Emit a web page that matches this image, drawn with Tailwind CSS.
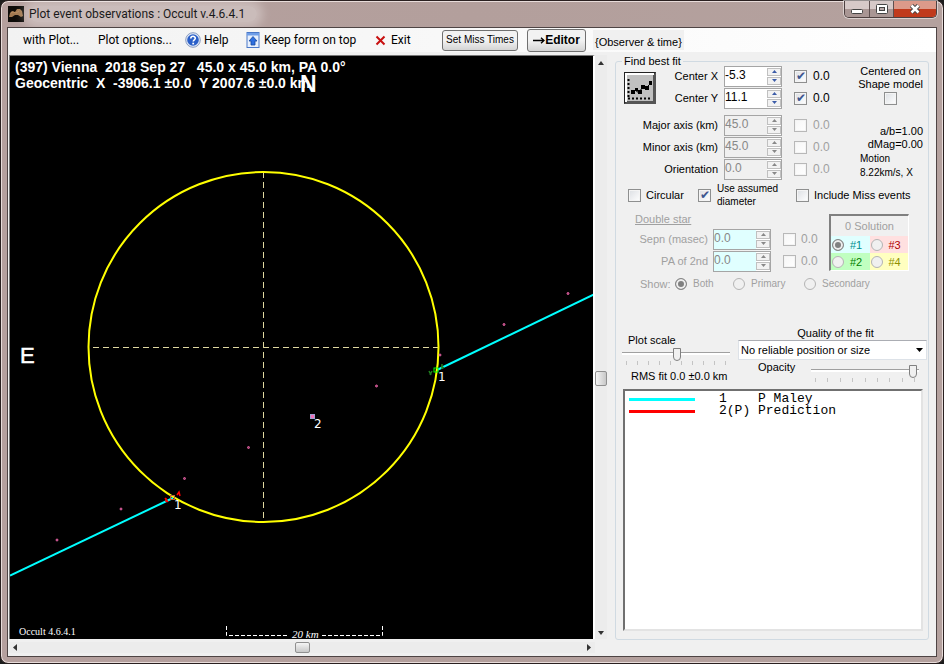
<!DOCTYPE html>
<html lang="en">
<head>
<meta charset="utf-8">
<title>Plot event observations : Occult v.4.6.4.1</title>
<script src="https://cdn.jsdelivr.net/npm/@tailwindcss/browser@4"></script>
</head>
<body class="bg-[#1c1c1c] font-['Liberation_Sans',Arial,sans-serif] text-[11px] text-black">
<svg class="hidden" aria-hidden="true">
  <symbol id="up" viewBox="0 0 5 3"><path d="M0 3 2.500 0 5 3Z" fill="currentColor"/></symbol>
  <symbol id="down" viewBox="0 0 5 3"><path d="M0 0 2.500 3 5 0Z" fill="currentColor"/></symbol>
</svg>
<div class="flex h-screen flex-col rounded-lg border border-[#2a2020] bg-linear-to-r from-[#b5a09e] via-[#b39f9c] to-[#b4a19e] px-1.5 pb-1.5 ring-1 ring-[#e8dcda] ring-inset">

  <header class="flex h-[26px] shrink-0 items-start justify-between">
    <div class="flex h-full items-center gap-[5px] pl-px">
      <svg class="size-4" viewBox="0 0 16 16" aria-hidden="true"><rect width="16" height="16" fill="#0d0b08"/><path d="M1 11 2 7 4 5 7 6 9 3 12 3 14 5 15 10 13 11 10 9 7 9 4 11Z" fill="#a07850"/><path d="M3 7 5 6 8 7 11 5" stroke="#b88c60" fill="none"/></svg>
      <h1 class="rounded-full bg-white/30 pr-3 font-[Roboto,'Noto_Sans',sans-serif] text-[12px] leading-4 text-[#1a1a1a] shadow-[0_0_10px_6px_rgba(255,255,255,0.3)]">Plot event observations : Occult v.4.6.4.1</h1>
    </div>
    <div class="flex h-[17px] overflow-hidden rounded-b-[5px] border border-t-0 border-[#4d4040] ring-1 ring-white/50">
      <button type="button" aria-label="Minimize" class="flex w-[25px] items-center justify-center border-r border-[#5e5050] bg-linear-to-b from-[#d6c9c8] from-50% to-[#a99694] to-50%"><svg class="mt-1 h-[5px] w-3" viewBox="0 0 12 5"><rect x=".5" y=".5" width="11" height="4" rx="1" fill="#fff" stroke="#444"/></svg></button>
      <button type="button" aria-label="Maximize" class="flex w-6 items-center justify-center border-r border-[#5e5050] bg-linear-to-b from-[#d6c9c8] from-50% to-[#a99694] to-50%"><svg class="h-[10px] w-3" viewBox="0 0 12 10"><rect x=".5" y=".5" width="11" height="9" rx="1" fill="#fff" stroke="#444"/><rect x="3.500" y="3.500" width="5" height="3" fill="#b8a8a8" stroke="#444"/></svg></button>
      <button type="button" aria-label="Close" class="flex w-[42px] items-center justify-center bg-linear-to-b from-[#dc9a8a] from-50% to-[#c03a1c] to-50%"><svg class="h-[10px] w-3" viewBox="0 0 12 10"><path d="M2.500 1.500 9.500 8.500M9.500 1.500 2.500 8.500" stroke="#444" stroke-width="4.500"/><path d="M2.500 1.500 9.500 8.500M9.500 1.500 2.500 8.500" stroke="#fff" stroke-width="2.500"/></svg></button>
    </div>
  </header>

  <div class="flex min-h-0 flex-1 flex-col border border-[#4e4444] bg-[#f0f0f0]">
    <nav class="flex h-6 shrink-0 items-center bg-linear-to-r from-[#f2f2f2] to-white pl-[15px] font-[Roboto,'Noto_Sans',sans-serif] text-[12px] leading-4">
      <button type="button" class="w-[75px] text-left whitespace-nowrap">with Plot...</button>
      <button type="button" class="w-[87px] text-left whitespace-nowrap">Plot options...</button>
      <button type="button" class="flex w-[60px] items-center gap-[3px]"><svg class="size-4" viewBox="0 0 16 16"><circle cx="8" cy="8" r="7.300" fill="#dfe8f7" stroke="#8a9cc0"/><circle cx="8" cy="8" r="5.800" fill="#2a5fc8"/><path d="M5.800 6.500C5.800 3.500 10.300 3.600 10.300 6.300 10.300 7.800 8.200 7.800 8.200 9.600" fill="none" stroke="#fff" stroke-width="1.600"/><rect x="7.300" y="10.700" width="1.800" height="1.700" fill="#fff"/></svg>Help</button>
      <button type="button" class="flex w-[129px] items-center gap-[3px] whitespace-nowrap"><svg class="size-4 shrink-0" viewBox="0 0 16 16"><rect x="2" y=".5" width="12" height="15" fill="#e8f0fd" stroke="#4a78c8"/><rect x="2" y="1" width="12" height="2.500" fill="#6f9ee8"/><path d="M8 4.500 12 9H10V13H6V9H4Z" fill="#2e6fe0" stroke="#174a9e" stroke-width=".8"/></svg>Keep form on top</button>
      <button type="button" class="flex w-[68px] items-center gap-[5px] pl-px"><svg class="size-[11px]" viewBox="0 0 11 11"><path d="M1.500 1.500 9.500 9.500M9.500 1.500 1.500 9.500" stroke="#c81010" stroke-width="2"/></svg>Exit</button>
      <button type="button" class="mr-[9px] h-[21px] w-[76px] rounded-[3px] border border-[#707070] bg-linear-to-b from-[#f2f2f2] from-50% to-[#d4d4d4] font-['Liberation_Sans',Arial,sans-serif] text-[10px] leading-3 whitespace-nowrap">Set Miss Times</button>
      <button type="button" class="mr-[7px] flex h-[23px] w-[59px] items-center justify-center rounded-[3px] border border-[#707070] bg-linear-to-b from-[#f2f2f2] from-50% to-[#d4d4d4] font-['Liberation_Sans',Arial,sans-serif] text-[12px] leading-4 font-bold"><svg class="h-[7px] w-3" viewBox="0 0 12 7"><path d="M0 3.500H11M8 .8 11 3.500 8 6.200" fill="none" stroke="#000" stroke-width="1.300"/></svg>Editor</button>
      <span class="bg-[#f0f0f0] px-0.5 pt-1 font-['Liberation_Sans',Arial,sans-serif] text-[11px] leading-4 whitespace-nowrap">{Observer &amp; time}</span>
    </nav>

    <main class="flex min-h-0 flex-1 pt-[3px] pl-px">
      <section class="flex min-w-0 flex-1 flex-col" aria-label="Plot">
        <div class="flex min-h-0 flex-1">
          <div class="min-w-0 flex-1 border-t border-r-2 border-l border-[#777] border-r-white bg-black">
            <svg class="block size-full" viewBox="10 56 583 583" font-family="Liberation Sans, Arial, sans-serif" fill="#fff">
              <g font-size="14" font-weight="bold">
                <text class="whitespace-pre" x="15" y="72">(397) Vienna  2018 Sep 27   45.0 x 45.0 km, PA 0.0°</text>
                <text class="whitespace-pre" x="15" y="88">Geocentric  X  -3906.1 ±0.0  Y 2007.6 ±0.0 km</text>
              </g>
              <text x="300" y="92" font-size="23" font-weight="bold">N</text>
              <text x="20" y="363" font-size="22" stroke="#fff" stroke-width=".5">E</text>
              <g stroke="#e0d8a0" stroke-dasharray="6 4">
                <path d="M263.500 172V522"/><path d="M93 347.500H438"/>
              </g>
              <g stroke="#00ffff" stroke-width="2"><path d="M10 575.500 173 498"/><path d="M437 370 594 294.500"/></g>
              <circle cx="263.500" cy="347" r="175" fill="none" stroke="#ffff00" stroke-width="2"/>
              <g fill="#a04070" stroke="#e060a0">
                <circle cx="568" cy="293.500" r="1"/><circle cx="504" cy="324.500" r="1"/><circle cx="440" cy="355" r="1"/><circle cx="376.500" cy="386" r="1"/><circle cx="248.500" cy="447.500" r="1"/><circle cx="184.500" cy="478.500" r="1"/><circle cx="121" cy="509" r="1"/><circle cx="57" cy="540" r="1"/>
              </g>
              <rect x="310" y="414" width="5" height="5" fill="#a0a0d0"/><rect x="311" y="415" width="3" height="3" fill="#f070b8"/>
              <rect x="434" y="368" width="4" height="4" fill="none" stroke="#00ff00"/>
              <path d="M429 371 431 375M432 371 430 375M442 364V369M441 366 444 368" stroke="#208020" stroke-width="1.500"/>
              <rect x="170.500" y="495.500" width="4" height="4" fill="none" stroke="#c06040"/>
              <path d="M165 498 168 502M166 502V498M177 495 179 492 180 496" fill="none" stroke="#ff0000" stroke-width="1.500"/>
              <g font-family="DejaVu Sans, Verdana, sans-serif" font-size="12"><text x="438" y="381">1</text><text x="314" y="428">2</text><text x="174" y="509">1</text></g>
              <g font-family="Liberation Serif, Times New Roman, serif"><text x="19" y="635" font-size="10">Occult 4.6.4.1</text><text x="292" y="638" font-size="11" font-style="italic">20 km</text></g>
              <path d="M226.500 626V635.500H289M322 635.500H382.500V625" fill="none" stroke="#fff" stroke-dasharray="4 2"/>
            </svg>
          </div>
          <div class="flex w-3 shrink-0 flex-col items-center bg-[#ececec] pt-[6px] pb-1">
            <button type="button" aria-label="Scroll up" class="flex"><svg class="h-1 w-2" viewBox="0 0 8 4"><path d="M1 4 4 0 7 4Z" fill="#333"/></svg></button>
            <div class="grow-[56]"></div>
            <div class="h-[15px] w-3 rounded-[2px] border border-[#909090] bg-linear-to-r from-[#f5f5f5] to-[#c8c8c8]"></div>
            <div class="grow-[45]"></div>
            <button type="button" aria-label="Scroll down" class="flex"><svg class="h-1 w-2" viewBox="0 0 8 4"><path d="M1 0 4 4 7 0Z" fill="#333"/></svg></button>
          </div>
        </div>
        <div class="mt-[3px] mr-3 mb-[3px] flex h-[11px] shrink-0 items-center justify-between bg-[#ececec] px-1">
          <button type="button" aria-label="Scroll left" class="flex"><svg class="h-[7px] w-1" viewBox="0 0 4 7"><path d="M4 0 0 3.500 4 7Z" fill="#333"/></svg></button>
          <div class="h-[11px] w-[15px] rounded-[2px] border border-[#909090] bg-linear-to-b from-[#f5f5f5] to-[#c8c8c8]"></div>
          <button type="button" aria-label="Scroll right" class="flex"><svg class="h-[7px] w-1" viewBox="0 0 4 7"><path d="M0 0 4 3.500 0 7Z" fill="#333"/></svg></button>
        </div>
      </section>

      <section class="flex w-[329px] shrink-0 flex-col pt-0.5 pr-[7px] pb-4 pl-2" aria-label="Fit settings">
        <fieldset class="flex min-h-0 min-w-0 flex-1 flex-col rounded-[3px] border border-[#d0dae2] pr-[5px] pb-2 pl-1.5 leading-[14px] [&_.box]:size-[13px] [&_.box]:shrink-0 [&_.box]:appearance-none [&_.box]:border [&_.box]:border-[#8e8f8f] [&_.box]:bg-linear-to-br [&_.box]:from-[#dcdfe3] [&_.box]:to-white [&_.box]:text-center [&_.box]:text-[12px] [&_.box]:leading-[11px] [&_.box]:text-[#3c5690] [&_.box]:outline-1 [&_.box]:-outline-offset-2 [&_.box]:outline-[#f4f4f4] [&_.box:checked]:before:content-['✔'] [&_.box:disabled]:border-[#b8b8b8] [&_.box:disabled]:from-[#f6f6f6] [&_.dot]:size-3 [&_.dot]:shrink-0 [&_.dot]:appearance-none [&_.dot]:rounded-full [&_.dot]:border [&_.dot]:border-[#b4b4b4] [&_.dot]:bg-[#f0f0f0] [&_.dot:checked]:border-[#888] [&_.dot:checked]:bg-[#808080] [&_.dot:checked]:inset-ring-2 [&_.dot:checked]:inset-ring-[#eeeeee] [&_.num]:text-[12px] [&_.spin]:flex [&_.spin]:h-[21px] [&_.spin]:border [&_.spin]:border-[#a5a5a5] [&_.spin]:text-[12px] [&_.spin>input]:w-[42px] [&_.spin>input]:pb-0.5 [&_.spin>span]:flex [&_.spin>span]:w-[14px] [&_.spin>span]:flex-col [&_.spin>span]:gap-px [&_.spin>span]:bg-white [&_.spin>span]:py-px [&_.spin_button]:flex [&_.spin_button]:flex-1 [&_.spin_button]:items-center [&_.spin_button]:justify-center [&_.spin_button]:border [&_.spin_button]:border-[#c0c0c0] [&_.spin_button]:bg-[#f2f2f2] [&_.spin_button]:text-[#3c5ca8] [&_.spin_button:disabled]:text-[#888] [&_.spin_svg]:h-[3px] [&_.spin_svg]:w-[5px] [&_label]:whitespace-nowrap">
          <legend class="px-0.5 leading-2 whitespace-nowrap">Find best fit</legend>

          <div class="flex pl-0.5">
            <div class="w-[219px] shrink-0">
              <div class="grid auto-rows-[22px] grid-cols-[32px_56px_58px_19px_30px] items-center gap-x-1.5">
                <button type="button" aria-label="Find best fit" class="row-span-2 mt-0.5 size-8"><svg class="size-8" viewBox="0 0 32 32"><rect width="32" height="32" fill="#555"/><path d="M0 0H32L30 2H2V30L0 32Z" fill="#222"/><path d="M1 1H30V3H3V30H1Z" fill="#fff"/><rect x="3" y="3" width="26" height="26" fill="#c0c0c0"/><path d="M4.500 7V27M4 26.500H26" stroke="#000" stroke-width="2" stroke-dasharray="2 2"/><path d="M8 21 11 18 15 21 19 14 22 16 27 11" fill="none" stroke="#000"/><path d="M7 18h4v4H7zM11 16h3v3h-3zM14 18h4v4h-4zM17 13h4v4h-4zM21 14h4v4h-4zM25 9h3v4h-3z"/></svg></button>
                <label for="cx" class="text-right">Center X</label>
                <div class="spin bg-white"><input id="cx" type="text" value="-5.3"><span><button type="button" aria-label="Center X up"><svg><use href="#up"/></svg></button><button type="button" aria-label="Center X down"><svg><use href="#down"/></svg></button></span></div>
                <input class="box justify-self-end" type="checkbox" id="kx" checked><label class="num" for="kx">0.0</label>
                <label for="cy" class="text-right">Center Y</label>
                <div class="spin bg-white"><input id="cy" type="text" value="11.1"><span><button type="button" aria-label="Center Y up"><svg><use href="#up"/></svg></button><button type="button" aria-label="Center Y down"><svg><use href="#down"/></svg></button></span></div>
                <input class="box justify-self-end" type="checkbox" id="ky" checked><label class="num" for="ky">0.0</label>
              </div>
              <div class="mt-[5px] grid auto-rows-[22px] grid-cols-[94px_58px_19px_30px] items-center gap-x-1.5">
                <label for="maj" class="text-right">Major axis (km)</label>
                <div class="spin text-[#888]"><input id="maj" type="text" value="45.0" disabled><span><button type="button" disabled aria-label="Major axis up"><svg><use href="#up"/></svg></button><button type="button" disabled aria-label="Major axis down"><svg><use href="#down"/></svg></button></span></div>
                <input class="box justify-self-end" type="checkbox" id="kmaj" disabled><label class="num text-[#a0a0a0]" for="kmaj">0.0</label>
                <label for="min" class="text-right">Minor axis (km)</label>
                <div class="spin text-[#888]"><input id="min" type="text" value="45.0" disabled><span><button type="button" disabled aria-label="Minor axis up"><svg><use href="#up"/></svg></button><button type="button" disabled aria-label="Minor axis down"><svg><use href="#down"/></svg></button></span></div>
                <input class="box justify-self-end" type="checkbox" id="kmin" disabled><label class="num text-[#a0a0a0]" for="kmin">0.0</label>
                <label for="ori" class="text-right">Orientation</label>
                <div class="spin text-[#888]"><input id="ori" type="text" value="0.0" disabled><span><button type="button" disabled aria-label="Orientation up"><svg><use href="#up"/></svg></button><button type="button" disabled aria-label="Orientation down"><svg><use href="#down"/></svg></button></span></div>
                <input class="box justify-self-end" type="checkbox" id="kori" disabled><label class="num text-[#a0a0a0]" for="kori">0.0</label>
              </div>
            </div>
            <div class="flex flex-1 flex-col">
              <div class="flex flex-col items-center self-end text-center leading-[13px]">
                <label for="shape">Centered on<br>Shape model</label>
                <input class="box mt-px" type="checkbox" id="shape">
              </div>
              <p class="mt-5 text-right leading-[13px]">a/b=1.00<br>dMag=0.00</p>
              <p class="mt-px pl-[17px] text-[10px] leading-[14px]">Motion<br>8.22km/s, X</p>
            </div>
          </div>

          <div class="flex items-center pt-0.5 pl-1.5">
            <span class="flex w-[70px] items-center gap-[5px]"><input class="box" type="checkbox" id="circ"><label for="circ">Circular</label></span>
            <span class="flex w-[98px] items-center gap-1.5"><input class="box" type="checkbox" id="diam" checked><label for="diam" class="text-[10px] leading-[13px]">Use assumed<br>diameter</label></span>
            <span class="flex items-center gap-[5px]"><input class="box" type="checkbox" id="miss"><label for="miss">Include Miss events</label></span>
          </div>

          <div class="mt-1 flex justify-between pr-3.5 text-[#a0a0a0]">
            <div>
              <p class="pl-[13px] underline">Double star</p>
              <div class="mt-0.5 grid auto-rows-[22px] grid-cols-[86px_58px_20px_20px] items-center gap-x-[5px]">
                <label for="sep" class="text-right">Sepn (masec)</label>
                <div class="spin bg-[#e0ffff] text-[#888]"><input id="sep" type="text" value="0.0" disabled><span><button type="button" disabled aria-label="Separation up"><svg><use href="#up"/></svg></button><button type="button" disabled aria-label="Separation down"><svg><use href="#down"/></svg></button></span></div>
                <input class="box justify-self-end" type="checkbox" id="ksep" disabled><label class="num" for="ksep">0.0</label>
                <label for="pa" class="text-right">PA of 2nd</label>
                <div class="spin bg-[#e0ffff] text-[#888]"><input id="pa" type="text" value="0.0" disabled><span><button type="button" disabled aria-label="PA up"><svg><use href="#up"/></svg></button><button type="button" disabled aria-label="PA down"><svg><use href="#down"/></svg></button></span></div>
                <input class="box justify-self-end" type="checkbox" id="kpa" disabled><label class="num" for="kpa">0.0</label>
              </div>
            </div>
            <div class="mt-0.5 mb-px flex w-20 flex-col border-t-2 border-r border-b border-l-2 border-[#808080] border-r-white border-b-white" role="group" aria-label="Solution">
              <p class="flex flex-1 items-center justify-center">0 Solution</p>
              <div class="grid auto-rows-[17px] grid-cols-2 text-[11px] [&>span]:flex [&>span]:items-center [&>span]:gap-1.5 [&>span]:pl-px">
                <span class="bg-[#e0ffff] text-[#009090]"><input class="dot" type="radio" name="sol" id="s1" checked><label for="s1">#1</label></span>
                <span class="bg-[#ffe0e0] text-[#b00000]"><input class="dot" type="radio" name="sol" id="s3"><label for="s3">#3</label></span>
                <span class="bg-[#c0ffc0] text-[#008000]"><input class="dot" type="radio" name="sol" id="s2"><label for="s2">#2</label></span>
                <span class="bg-[#ffffc0] text-[#909000]"><input class="dot" type="radio" name="sol" id="s4"><label for="s4">#4</label></span>
              </div>
            </div>
          </div>

          <div class="flex h-6 items-center pl-[18px] text-[10px] text-[#a0a0a0]">
            <span class="w-[35px] text-[11px]">Show:</span>
            <span class="flex w-[58px] items-center gap-1.5"><input class="dot" type="radio" name="show" id="both" checked disabled><label for="both">Both</label></span>
            <span class="flex w-[71px] items-center gap-1.5"><input class="dot" type="radio" name="show" id="prim" disabled><label for="prim">Primary</label></span>
            <span class="flex items-center gap-1.5"><input class="dot" type="radio" name="show" id="sec" disabled><label for="sec">Secondary</label></span>
          </div>

          <div class="-mr-1 flex justify-between pt-[30px] [&_.range]:block [&_.range]:h-[14px] [&_.range]:w-[108px] [&_.range]:appearance-none [&_.range::-webkit-slider-runnable-track]:h-[3px] [&_.range::-webkit-slider-runnable-track]:border-t [&_.range::-webkit-slider-runnable-track]:border-[#a0a0a0] [&_.range::-webkit-slider-runnable-track]:bg-white [&_.range::-webkit-slider-thumb]:-mt-[5px] [&_.range::-webkit-slider-thumb]:h-[13px] [&_.range::-webkit-slider-thumb]:w-2 [&_.range::-webkit-slider-thumb]:appearance-none [&_.range::-webkit-slider-thumb]:rounded-b-[4px] [&_.range::-webkit-slider-thumb]:border [&_.range::-webkit-slider-thumb]:border-[#808080] [&_.range::-webkit-slider-thumb]:bg-[#f0f0f0] [&_.ticks]:flex [&_.ticks]:h-1 [&_.ticks]:justify-between [&_.ticks]:px-1 [&_.ticks>i]:w-px [&_.ticks>i]:bg-[#c4c4c4]">
            <div class="w-[108px] pt-2">
              <label for="scale" class="block pl-1.5 leading-3">Plot scale</label>
              <input id="scale" class="range" type="range" value="51">
              <div class="ticks mt-px"><i></i><i></i><i></i><i></i><i></i><i></i><i></i><i></i><i></i><i></i></div>
              <p class="pt-1 pl-[9px] whitespace-nowrap">RMS fit 0.0 ±0.0 km</p>
            </div>
            <div class="w-[189px]">
              <label for="quality" class="block pl-1.5 text-center">Quality of the fit</label>
              <div class="grid items-center">
                <select id="quality" class="col-start-1 row-start-1 h-5 appearance-none border border-[#dde2e8] border-t-[#abadb3] bg-white pl-0.5 text-[11px]"><option>No reliable position or size</option></select>
                <svg class="pointer-events-none col-start-1 row-start-1 mr-1 h-1 w-[7px] justify-self-end" viewBox="0 0 7 4"><path d="M0 0H7L3.500 4Z"/></svg>
              </div>
              <div class="flex justify-between pr-2 pl-5">
                <label for="opacity">Opacity</label>
                <div class="pt-[3px]">
                  <input id="opacity" class="range" type="range" value="98">
                  <div class="ticks mt-px"><i></i><i></i><i></i><i></i><i></i><i></i><i></i><i></i><i></i></div>
                </div>
              </div>
            </div>
          </div>

          <div class="mt-[6px] ml-px min-h-0 flex-1 border-2 border-[#707070] border-r-[#e3e3e3] border-b-[#e3e3e3] bg-white px-1 pt-0.5 font-['Liberation_Mono','Courier_New',monospace] text-[13px] leading-3">
            <ul>
              <li class="flex items-center"><span class="mr-6 h-[3px] w-[66px] bg-[#00ffff]"></span><span class="whitespace-pre">1    P Maley</span></li>
              <li class="flex items-center"><span class="mr-6 h-[3px] w-[66px] bg-[#ff0000]"></span><span class="whitespace-pre">2(P) Prediction</span></li>
            </ul>
          </div>
        </fieldset>
      </section>
    </main>
  </div>
</div>
</body>
</html>
